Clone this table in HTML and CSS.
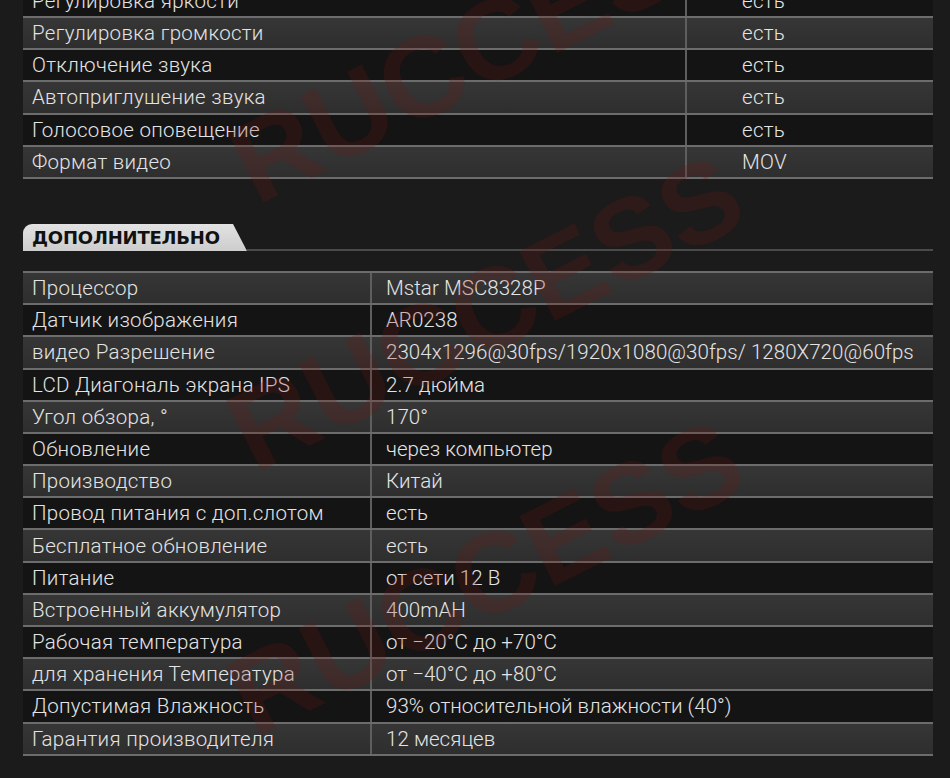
FILE: index.html
```html
<!DOCTYPE html>
<html lang="ru">
<head>
<meta charset="utf-8">
<title>Характеристики</title>
<link rel="stylesheet" href="styles.css">
</head>
<body>
<div class="page">
  <section class="specs specs--main">
    <div class="row row--dark"><div class="cell">Регулировка яркости</div><div class="cell cell--value">есть</div></div>
    <div class="row row--light"><div class="cell">Регулировка громкости</div><div class="cell cell--value">есть</div></div>
    <div class="row row--dark"><div class="cell">Отключение звука</div><div class="cell cell--value">есть</div></div>
    <div class="row row--light"><div class="cell">Автоприглушение звука</div><div class="cell cell--value">есть</div></div>
    <div class="row row--dark"><div class="cell">Голосовое оповещение</div><div class="cell cell--value">есть</div></div>
    <div class="row row--light"><div class="cell">Формат видео</div><div class="cell cell--value">MOV</div></div>
  </section>

  <div class="section-head">
    <span class="tab">ДОПОЛНИТЕЛЬНО</span>
    <span class="rule"></span>
  </div>

  <section class="specs specs--extra">
    <div class="row row--light"><div class="cell">Процессор</div><div class="cell cell--value">Mstar MSC8328P</div></div>
    <div class="row row--dark"><div class="cell">Датчик изображения</div><div class="cell cell--value">AR0238</div></div>
    <div class="row row--light"><div class="cell">видео Разрешение</div><div class="cell cell--value">2304x1296@30fps/1920x1080@30fps/ 1280X720@60fps</div></div>
    <div class="row row--dark"><div class="cell">LCD Диагональ экрана IPS</div><div class="cell cell--value">2.7 дюйма</div></div>
    <div class="row row--light"><div class="cell">Угол обзора, °</div><div class="cell cell--value">170°</div></div>
    <div class="row row--dark"><div class="cell">Обновление</div><div class="cell cell--value">через компьютер</div></div>
    <div class="row row--light"><div class="cell">Производство</div><div class="cell cell--value">Китай</div></div>
    <div class="row row--dark"><div class="cell">Провод питания с доп.слотом</div><div class="cell cell--value">есть</div></div>
    <div class="row row--light"><div class="cell">Бесплатное обновление</div><div class="cell cell--value">есть</div></div>
    <div class="row row--dark"><div class="cell">Питание</div><div class="cell cell--value">от сети 12 В</div></div>
    <div class="row row--light"><div class="cell">Встроенный аккумулятор</div><div class="cell cell--value">400mAH</div></div>
    <div class="row row--dark"><div class="cell">Рабочая температура</div><div class="cell cell--value">от −20°C до +70°C</div></div>
    <div class="row row--light"><div class="cell">для хранения Температура</div><div class="cell cell--value">от −40°C до +80°C</div></div>
    <div class="row row--dark"><div class="cell">Допустимая Влажность</div><div class="cell cell--value">93% относительной влажности (40°)</div></div>
    <div class="row row--light"><div class="cell">Гарантия производителя</div><div class="cell cell--value">12 месяцев</div></div>
  </section>

  <div class="watermark watermark--one" aria-hidden="true">RUCCESS</div>
  <div class="watermark watermark--two" aria-hidden="true">RUCCESS</div>
  <div class="watermark watermark--three" aria-hidden="true">RUCCESS</div>
</div>
</body>
</html>
```
FILE: styles.css
```css
html, body {
  margin: 0;
  padding: 0;
  background: #1b1b1b;
  overflow: hidden;
}

.page {
  position: relative;
  margin-top: -16.2px;
  padding: 0 17px 0 23px;
  font-family: Roboto, "Open Sans", "Liberation Sans", sans-serif;
  font-weight: 300;
  font-size: 20.5px;
  letter-spacing: 0.3px;
  color: #e4e4e4;
}

.specs {
  display: flex;
  flex-direction: column;
}

.row {
  display: grid;
  height: 30.2px;
  border-top: 2px solid #6c6c6c;
}

.row:last-child {
  border-bottom: 2px solid #6c6c6c;
}

.row--light {
  background: linear-gradient(#363636, #2e2e2e);
}

.row--dark {
  background: #141414;
}

.specs--main .row {
  grid-template-columns: 662px 1fr;
}

.specs--extra .row {
  grid-template-columns: 347px 1fr;
}

.cell {
  display: flex;
  align-items: center;
  padding-left: 9px;
  white-space: nowrap;
}

.cell--value {
  border-left: 2px solid #5e5e5e;
}

.specs--main .cell--value {
  padding-left: 55px;
}

.specs--extra .cell--value {
  padding-left: 14px;
  letter-spacing: 0.05px;
}

.section-head {
  display: flex;
  align-items: flex-end;
  margin-top: 45px;
  margin-bottom: 20px;
  height: 27px;
}

.tab {
  box-sizing: border-box;
  width: 224px;
  height: 27px;
  padding: 4px 0 0 9px;
  background: linear-gradient(#e2e2e2, #cdcdcd);
  border-top-left-radius: 9px;
  clip-path: polygon(0 0, 210px 0, 100% 100%, 0 100%);
  font-family: "DejaVu Sans", "Liberation Sans", sans-serif;
  font-weight: 700;
  font-size: 18px;
  letter-spacing: -0.2px;
  line-height: 20px;
  color: #111;
}

.rule {
  flex: 1;
  height: 2px;
  background: #4a4a4a;
}

.watermark {
  position: absolute;
  left: 0;
  top: 0;
  transform-origin: 0 100%;
  transform: rotate(-27deg);
  font-family: "Liberation Sans", Arial, sans-serif;
  font-weight: 700;
  font-size: 114px;
  line-height: 114px;
  letter-spacing: 0;
  color: rgba(120, 22, 22, 0.22);
  pointer-events: none;
  white-space: nowrap;
}

.watermark--one {
  left: 265px;
  top: 124px;
}

.watermark--two {
  left: 263px;
  top: 392px;
}

.watermark--three {
  left: 263px;
  top: 657px;
}
```
